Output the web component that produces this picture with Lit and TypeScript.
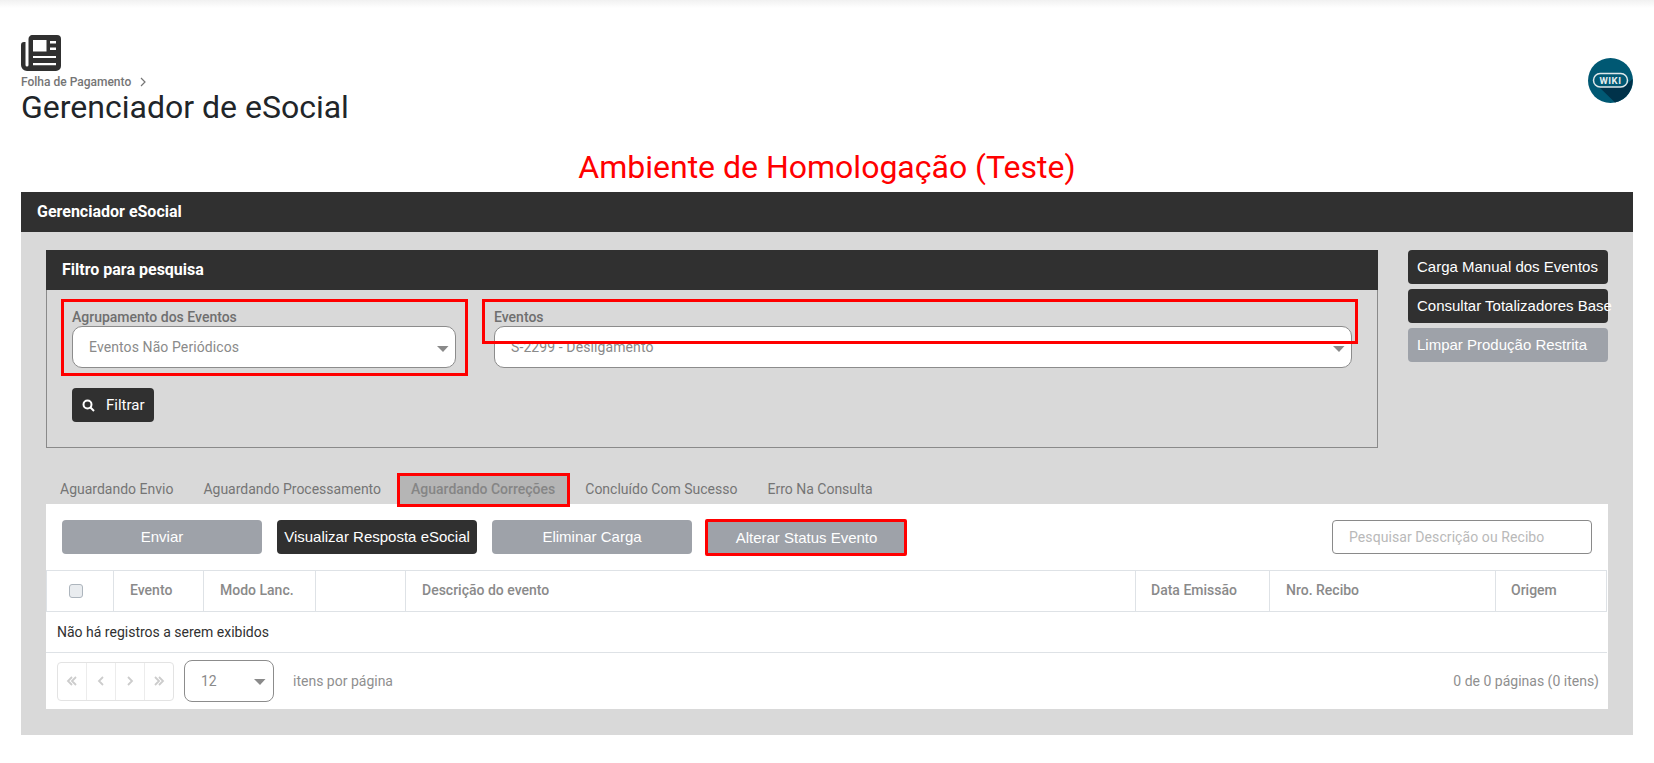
import { LitElement, html, css, svg } from "lit";
import { customElement } from "lit/decorators.js";

const caret = html`<svg class="caret" width="14" height="8" viewBox="0 0 14 8"><path d="M1 1h11.5L7 7z" fill="#8a8a8a"/></svg>`;
const pager = (d: string) => html`<span class="pg"><svg width="14" height="14" viewBox="0 0 14 14" fill="none" stroke="#ccc" stroke-width="1.800">${svg`<path d=${d}/>`}</svg></span>`;

@customElement("app-root")
export class AppRoot extends LitElement {
  static styles = css`
    :host { display: block; font-family: Roboto, "Liberation Sans", sans-serif; color: #212529; background: #fff; height: 763px; overflow: hidden; font-size: 14px; }
    *, *::after { box-sizing: border-box; }
    .topshade { height: 8px; background: linear-gradient(#f1f1f1, #fff); }
    .head { display: flex; justify-content: space-between; padding: 27px 21px 0; height: 134px; }
    .head-l { display: flex; flex-direction: column; align-items: flex-start; }
    .news { display: block; width: 40px; height: 36px; }
    .crumb { display: flex; align-items: center; gap: 8px; font-size: 12px; font-weight: 500; color: #757575; margin-top: 4px; line-height: 14px; }
    h1 { margin: -1px 0 0; font-size: 32px; font-weight: 400; line-height: 38px; color: #212529; }
    .wiki { margin: 23px 0 0; display: block; }
    .env { height: 50px; text-align: center; color: #f00; font-size: 32px; line-height: 50px; }
    .panel { margin: 0 21px; background: #d9d9d9; height: 543px; }
    .bar { height: 40px; background: #303030; color: #fff; font-weight: 700; font-size: 16px; line-height: 40px; padding-left: 16px; }
    .panel-body { padding: 18px 25px 0; }
    .top-row { display: flex; gap: 30px; align-items: flex-start; }
    .filter { width: 1332px; height: 198px; border: 1px solid #8a8a8a; border-top: 0; }
    .filter .bar { margin: 0 -1px; }
    .filter-body { display: flex; padding: 9px 20px 0 14px; gap: 14px; }
    .red { border: 3px solid #f00; }
    .field1 { width: 407px; height: 77px; padding: 6px 9px 0 8px; flex: none; }
    .field2 { position: relative; flex: 1; padding: 9px 5px 0 12px; height: 69px; }
    .field2::after { content: ""; position: absolute; left: 0; top: 0; width: 876px; height: 45px; border: 3px solid #f00; }
    label { display: block; font-weight: 500; font-size: 14px; line-height: 18px; color: #6f6f6f; }
    .select { position: relative; height: 42px; background: #fff; border: 1px solid #8c8c8c; border-radius: 10px; color: #8a8a8a; line-height: 40px; padding-left: 16px; letter-spacing: .1px; }
    .caret { position: absolute; right: 5px; top: 18px; }
    .filtrar { margin: 12px 0 0 25px; width: 82px; height: 34px; display: flex; align-items: center; gap: 11px; padding-left: 10px; background: #303030; border-radius: 4px; color: #fff; font-size: 15px; }
    .side { display: flex; flex-direction: column; gap: 5px; }
    .btn { height: 34px; border-radius: 4px; color: #fff; font-family: "Liberation Sans", Arial, sans-serif; font-size: 15px; line-height: 34px; white-space: nowrap; }
    .side .btn { width: 200px; padding-left: 9px; }
    .dark { background: #303030; }
    .gray { background: #9ea2a9; }
    .tabs { display: flex; height: 40px; margin-top: 16px; align-items: flex-end; color: #757575; }
    .tab { height: 29px; line-height: 29px; padding: 0 15px; }
    .tab:first-child { padding-left: 14px; }
    .tab.sel { height: 34px; margin: 0 0 -3px 1px; background: #b5b5b5; border: 3px solid #f00; padding: 0 12px 0 11px; line-height: 27px; color: #858585; font-weight: 500; position: relative; }
    .work { background: #fff; height: 205px; width: 1562px; }
    .tools { display: flex; align-items: flex-start; padding: 16px 16px 0; height: 66px; }
    .tools .btn { width: 200px; text-align: center; margin-right: 15px; }
    .tools .boxed { width: 202px; height: 37px; margin: -1px 0 0 -2px; padding-left: 1px; border: 3px solid #f00; border-radius: 2px; line-height: 31px; }
    .search { margin-left: auto; width: 260px; height: 34px; border: 1px solid #8a8a8a; border-radius: 4px; color: #b9b9b9; line-height: 32px; padding-left: 16px; letter-spacing: .08px; }
    .table { width: 1561px; }
    .thead { display: grid; grid-template-columns: 67px 90px 112px 90px 730px 134px 226px 111px; height: 42px; border: 1px solid #dee2e6; }
    .th { border-right: 1px solid #dee2e6; font-weight: 500; color: #8a8a8a; line-height: 38px; padding-left: 16px; }
    .th.tight { padding-left: 15px; }
    .th:last-child { border-right: 0; }
    .chk { display: block; width: 14px; height: 14px; margin: 13px 0 0 6px; background: #e9ecef; border: 1px solid #adb5bd; border-radius: 3px; }
    .row { height: 41px; line-height: 40px; padding-left: 11px; border-bottom: 1px solid #dee2e6; color: #303030; }
    .foot { display: flex; align-items: center; height: 56px; padding: 0 8px 0 11px; color: #8f8f8f; }
    .pgs { display: flex; width: 117px; height: 39px; border: 1px solid #e3e3e3; border-radius: 4px; }
    .pg { flex: 1; display: flex; align-items: center; justify-content: center; border-right: 1px solid #ececec; }
    .pg:last-child { border-right: 0; }
    .size { position: relative; width: 90px; height: 42px; margin-left: 10px; border: 1px solid #8c8c8c; border-radius: 8px; color: #8a8a8a; line-height: 40px; padding-left: 16px; }
    .size .caret { right: 6px; top: 17px; }
    .ipp { margin-left: 19px; }
    .count { margin-left: auto; }
  `;

  render() {
    return html`
      <div class="topshade"></div>
      <header class="head">
        <div class="head-l">
          <svg class="news" viewBox="0 0 40 36">
            <path fill="#303030" fill-rule="evenodd" d="M12 0h24a4 4 0 0 1 4 4v27a5 5 0 0 1-5 5H6a6 6 0 0 1-6-6V10a3 3 0 0 1 3-3h1.500v23a1.500 1.500 0 0 0 3 0V4a4 4 0 0 1 4.500-4zM12 5v11.500h13.500V5zM29 6v2.500h6V6zM29 12.500v2.500h6v-2.500zM12 21v2h23v-2zM12 28v2.200h23V28z"/>
          </svg>
          <div class="crumb">Folha de Pagamento
            <svg width="8" height="10" viewBox="0 0 8 10" fill="none" stroke="#757575" stroke-width="1.200"><path d="M2 1l4 4-4 4"/></svg>
          </div>
          <h1>Gerenciador de eSocial</h1>
        </div>
        <svg class="wiki" width="45" height="45" viewBox="0 0 45 45">
          <circle cx="22.500" cy="22.500" r="22.500" fill="#005873"/>
          <path fill="#00324a" d="M9 27h29l6.500-6A22.500 22.500 0 0 1 27 44.500z"/>
          <rect x="5.500" y="15.500" width="34" height="13.500" rx="6.700" fill="#005873" stroke="#dfe8eb" stroke-width="1.500"/>
          <text x="22.500" y="25.800" text-anchor="middle" font-family="Roboto" font-weight="700" font-size="9.500" letter-spacing=".5" fill="#e6eef0">WIKI</text>
        </svg>
      </header>
      <div class="env">Ambiente de Homologação (Teste)</div>
      <section class="panel">
        <div class="bar">Gerenciador eSocial</div>
        <div class="panel-body">
          <div class="top-row">
            <div class="filter">
              <div class="bar">Filtro para pesquisa</div>
              <div class="filter-body">
                <div class="field1 red">
                  <label>Agrupamento dos Eventos</label>
                  <div class="select">Eventos Não Periódicos ${caret}</div>
                </div>
                <div class="field2">
                  <label>Eventos</label>
                  <div class="select">S-2299 - Desligamento ${caret}</div>
                </div>
              </div>
              <div class="filtrar">
                <svg width="13" height="13" viewBox="0 0 13 13" fill="none" stroke="#fff" stroke-width="2"><circle cx="5.500" cy="5.500" r="4"/><path d="M8.500 8.500l3.500 3.500"/></svg>
                Filtrar
              </div>
            </div>
            <div class="side">
              <div class="btn dark">Carga Manual dos Eventos</div>
              <div class="btn dark">Consultar Totalizadores Base</div>
              <div class="btn gray">Limpar Produção Restrita</div>
            </div>
          </div>
          <nav class="tabs">
            <div class="tab">Aguardando Envio</div>
            <div class="tab">Aguardando Processamento</div>
            <div class="tab sel">Aguardando Correções</div>
            <div class="tab">Concluído Com Sucesso</div>
            <div class="tab">Erro Na Consulta</div>
          </nav>
          <div class="work">
            <div class="tools">
              <div class="btn gray">Enviar</div>
              <div class="btn dark">Visualizar Resposta eSocial</div>
              <div class="btn gray">Eliminar Carga</div>
              <div class="btn gray boxed">Alterar Status Evento</div>
              <div class="search">Pesquisar Descrição ou Recibo</div>
            </div>
            <div class="table">
              <div class="thead">
                <div class="th"><span class="chk"></span></div>
                <div class="th">Evento</div>
                <div class="th">Modo Lanc.</div>
                <div class="th"></div>
                <div class="th">Descrição do evento</div>
                <div class="th tight">Data Emissão</div>
                <div class="th">Nro. Recibo</div>
                <div class="th tight">Origem</div>
              </div>
              <div class="row">Não há registros a serem exibidos</div>
              <div class="foot">
                <div class="pgs">
                  ${pager("M7 3L3 7l4 4M11 3L7 7l4 4")}
                  ${pager("M9 3L5 7l4 4")}
                  ${pager("M5 3l4 4-4 4")}
                  ${pager("M3 3l4 4-4 4M7 3l4 4-4 4")}
                </div>
                <div class="size">12 ${caret}</div>
                <span class="ipp">itens por página</span>
                <span class="count">0 de 0 páginas (0 itens)</span>
              </div>
            </div>
          </div>
        </div>
      </section>
    `;
  }
}
